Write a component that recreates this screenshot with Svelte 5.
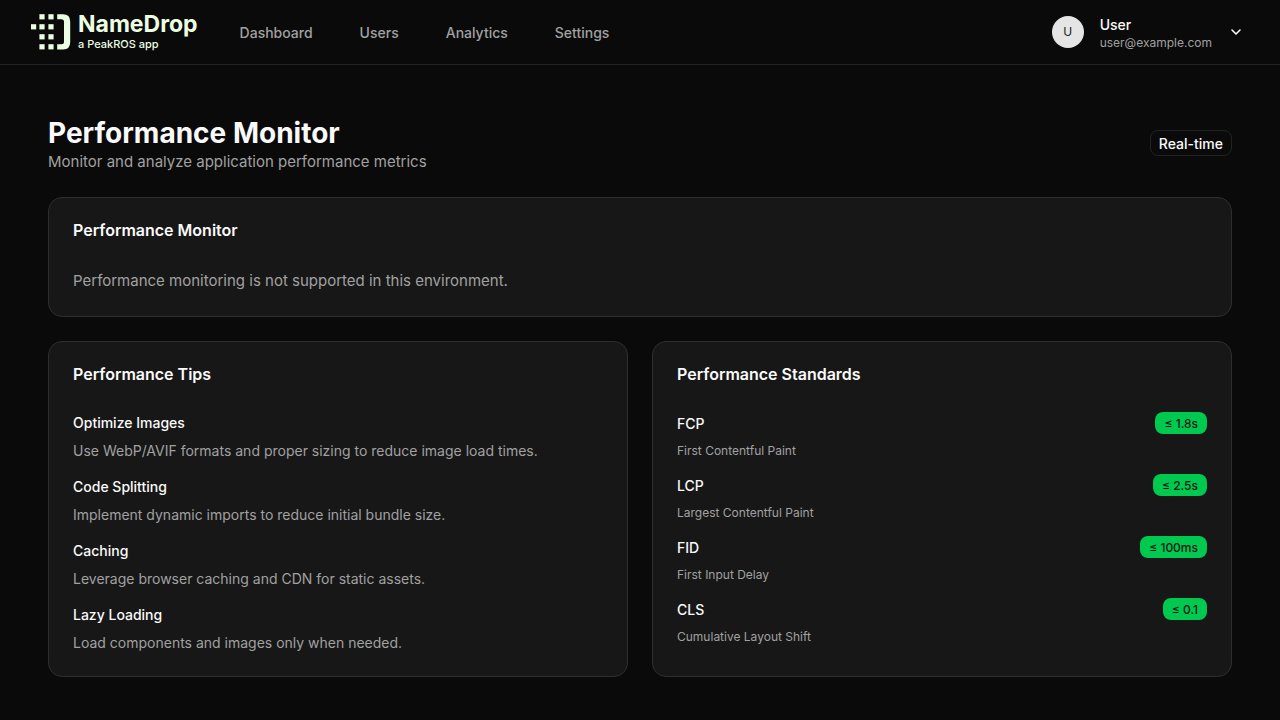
<script>
  const links = ['Dashboard', 'Users', 'Analytics', 'Settings'];

  const tips = [
    { title: 'Optimize Images', text: 'Use WebP/AVIF formats and proper sizing to reduce image load times.' },
    { title: 'Code Splitting', text: 'Implement dynamic imports to reduce initial bundle size.' },
    { title: 'Caching', text: 'Leverage browser caching and CDN for static assets.' },
    { title: 'Lazy Loading', text: 'Load components and images only when needed.' }
  ];

  const standards = [
    { name: 'FCP', limit: '≤ 1.8s', text: 'First Contentful Paint' },
    { name: 'LCP', limit: '≤ 2.5s', text: 'Largest Contentful Paint' },
    { name: 'FID', limit: '≤ 100ms', text: 'First Input Delay' },
    { name: 'CLS', limit: '≤ 0.1', text: 'Cumulative Layout Shift' }
  ];

  // Columns and rows of the dot grid in the logo, as [x, y]
  const dots = [
    [15.4, 0.2], [24.4, 0.2],
    [7, 10.2], [15.4, 10.2], [24.4, 10.2],
    [15.4, 20.2], [24.4, 20.2],
    [15.4, 30.2], [24.4, 30.2]
  ];
</script>

<header class="topbar">
  <a class="brand" href="#home">
    <svg width="48" height="36" viewBox="0 0 48 36" aria-hidden="true">
      {#each dots as [x, y]}
        <rect {x} {y} width="5.2" height="5.2" />
      {/each}
      <path d="M33.2 .2H39Q46.2 .2 46.2 7.4V28.2Q46.2 35.4 39 35.4H33.2V30.3H37.5Q40 30.3 40 27.8V7.8Q40 5.3 37.5 5.3H33.2Z" />
    </svg>
    <span class="wordmark">
      <span class="name">NameDrop</span>
      <span class="byline">a PeakROS app</span>
    </span>
  </a>
  <nav>
    {#each links as link}
      <a href={'#' + link.toLowerCase()}>{link}</a>
    {/each}
  </nav>
  <button class="account" type="button">
    <span class="avatar">U</span>
    <span class="who">
      <span class="user">User</span>
      <span class="email">user@example.com</span>
    </span>
    <svg width="16" height="16" viewBox="0 0 24 24" fill="none" stroke="currentColor" stroke-width="2.4" stroke-linecap="round" stroke-linejoin="round" aria-hidden="true">
      <path d="m6 9 6 6 6-6" />
    </svg>
  </button>
</header>

<main>
  <div class="heading">
    <div class="title">
      <h1>Performance Monitor</h1>
      <p>Monitor and analyze application performance metrics</p>
    </div>
    <span class="live">Real-time</span>
  </div>

  <section class="card">
    <h2>Performance Monitor</h2>
    <p class="notice">Performance monitoring is not supported in this environment.</p>
  </section>

  <div class="columns">
    <section class="card">
      <h2>Performance Tips</h2>
      <div class="list">
        {#each tips as tip}
          <div class="item">
            <h3>{tip.title}</h3>
            <p>{tip.text}</p>
          </div>
        {/each}
      </div>
    </section>
    <section class="card">
      <h2>Performance Standards</h2>
      <div class="list">
        {#each standards as standard}
          <div class="item">
            <div class="metric">
              <h3>{standard.name}</h3>
              <span class="limit">{standard.limit}</span>
            </div>
            <p class="small">{standard.text}</p>
          </div>
        {/each}
      </div>
    </section>
  </div>
</main>

<style>
  :global(body) {
    margin: 0;
    background: #0a0a0a;
    color: #fafafa;
    font-family: Inter, sans-serif;
    font-size: 15px;
    line-height: 24px;
  }
  h1, h2, h3, p { margin: 0; }
  a { color: inherit; text-decoration: none; }

  .topbar {
    display: flex;
    align-items: center;
    height: 64px;
    padding: 0 36px 0 24px;
    border-bottom: 1px solid #222222;
  }
  .brand {
    display: flex;
    align-items: center;
    gap: 6px;
    color: #ecfee2;
  }
  .brand svg { fill: currentColor; }
  .wordmark { display: flex; flex-direction: column; }
  .name { font-size: 23px; line-height: 24px; font-weight: 700; }
  .byline { font-size: 11px; line-height: 16px; font-weight: 500; }
  nav {
    display: flex;
    gap: 47px;
    margin-left: 42px;
    padding-top: 2px;
    font-size: 14px;
    line-height: 20px;
    font-weight: 500;
    color: #a1a1a1;
  }
  .account {
    display: flex;
    align-items: center;
    gap: 16px;
    margin-left: auto;
    padding: 0;
    border: 0;
    background: none;
    color: inherit;
    font: inherit;
    text-align: left;
    cursor: pointer;
  }
  .avatar {
    display: grid;
    place-items: center;
    width: 32px;
    height: 32px;
    border-radius: 50%;
    background: #e5e5e5;
    color: #171717;
    font-size: 12px;
  }
  .who { display: flex; flex-direction: column; padding-top: 2px; }
  .user { font-size: 14px; line-height: 20px; font-weight: 500; }
  .email { font-size: 12px; line-height: 16px; color: #a1a1a1; }

  main {
    display: flex;
    flex-direction: column;
    gap: 24px;
    padding: 48px 48px 40px;
  }
  .heading {
    display: flex;
    align-items: center;
    justify-content: space-between;
    color: #a1a1a1;
  }
  .title { padding: 1px 0; }
  .title p { line-height: 20px; }
  h1 {
    color: #fafafa;
    font-size: 28px;
    line-height: 38px;
    font-weight: 700;
  }
  .live {
    padding: 3px 8px 1px;
    border: 1px solid #222222;
    border-radius: 8px;
    color: #fafafa;
    font-size: 14px;
    line-height: 20px;
    font-weight: 500;
  }
  .card {
    padding: 24px;
    border: 1px solid #2e2e2e;
    border-radius: 14px;
    background: #171717;
  }
  h2 {
    margin-bottom: 30px;
    font-size: 16px;
    line-height: 16px;
    font-weight: 600;
  }
  .notice { padding-top: 2px; line-height: 22px; color: #a1a1a1; }
  .columns {
    display: grid;
    grid-template-columns: 1fr 1fr;
    gap: 24px;
  }
  .columns .card { padding-bottom: 22px; }
  .list { display: flex; flex-direction: column; gap: 14px; }
  .item { display: flex; flex-direction: column; gap: 6px; }
  .item p { font-size: 14px; line-height: 22px; color: #a1a1a1; }
  .item p.small { font-size: 12px; line-height: 18px; }
  h3 { font-size: 14px; line-height: 22px; font-weight: 500; }
  .metric {
    display: flex;
    align-items: flex-start;
    justify-content: space-between;
  }
  .metric h3 { line-height: 24px; }
  .limit {
    padding: 4px 9px 2px;
    border-radius: 8px;
    background: #00c950;
    color: #171717;
    font-size: 12px;
    line-height: 16px;
    font-weight: 500;
  }
</style>
